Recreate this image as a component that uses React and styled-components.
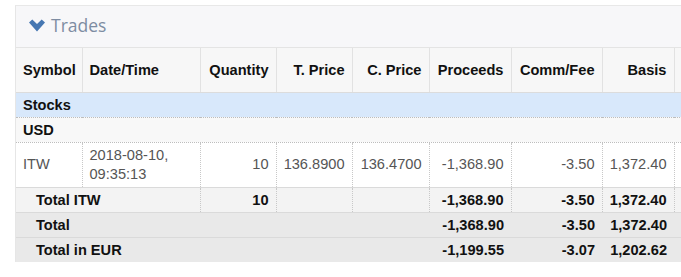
import React from 'react'
import styled, { createGlobalStyle } from 'styled-components'

const GlobalStyle = createGlobalStyle`
  html, body {
    margin: 0;
    padding: 0;
    background: #fff;
    overflow: hidden;
  }
  body {
    font-family: "Liberation Sans", Arial, sans-serif;
  }
`

const columns = [66, 118, 76, 76, 77, 82, 91, 72, 60]

const Page = styled.div`
  padding: 5px 0 0 15px;
  width: 760px;
`

const Panel = styled.section`
  border-left: 1px solid #e6e6e6;
  border-top: 1px solid #e8e8e8;
  box-sizing: border-box;
`

const PanelHeader = styled.div`
  display: flex;
  align-items: center;
  gap: 6px;
  height: 42px;
  padding: 0 0 3px 13px;
  box-sizing: border-box;
  background: #f7f7f9;
  border-bottom: 1px solid #e4e4e4;
`

const Title = styled.h2`
  margin: 0;
  font-family: "Open Sans", sans-serif;
  font-weight: 400;
  font-size: 17.5px;
  color: #7d8ca2;
`

const Table = styled.table`
  border-collapse: collapse;
  table-layout: fixed;
  width: ${columns.reduce((a, b) => a + b, 0)}px;
  font-size: 14.6px;
`

const HeadCell = styled.th`
  height: 44px;
  padding: 0 7px;
  box-sizing: border-box;
  background: #f7f7f7;
  color: #111;
  font-weight: 700;
  text-align: ${p => p.$align || 'right'};
  border-right: 1px solid #e2e2e2;
  border-bottom: 1px solid #dcdcdc;
  white-space: nowrap;
`

const GroupRow = styled.tr`
  background: ${p => p.$bg};
`

const GroupCell = styled.td`
  height: 24px;
  padding: 0 7px;
  font-weight: 700;
  color: #111;
  border-bottom: 1px dotted #bdbdbd;
`

const DataRow = styled.tr`
  background: #fff;
`

const Cell = styled.td`
  height: 45px;
  padding: 3px 7px;
  box-sizing: border-box;
  color: #555;
  line-height: 19px;
  text-align: ${p => p.$align || 'right'};
  border-right: 1px dotted #c8c8c8;
  border-bottom: 1px dotted #c8c8c8;
  vertical-align: middle;
`

const TotalRow = styled.tr`
  background: ${p => p.$bg};
`

const TotalCell = styled.td`
  height: 24px;
  padding: 0 7px 0 ${p => (p.$indent ? '20px' : '7px')};
  color: #111;
  font-weight: 700;
  text-align: ${p => p.$align || 'right'};
  border-right: ${p => (p.$divided ? '1px dotted #c8c8c8' : 'none')};
  border-top: 1px solid #dadada;
  white-space: nowrap;
`

const Chevron = () => (
  <svg width="16" height="13" viewBox="0 0 16 13" aria-hidden="true">
    <path d="M0 3.6 L3.3 0.4 L8 5.1 L12.7 0.4 L16 3.6 L8 12.4 Z" fill="#4677b2" />
  </svg>
)

const headers = [
  ['Symbol', 'left'],
  ['Date/Time', 'left'],
  ['Quantity'],
  ['T. Price'],
  ['C. Price'],
  ['Proceeds'],
  ['Comm/Fee'],
  ['Basis'],
  [''],
]

const totals = [
  { label: 'Total', proceeds: '-1,368.90', fee: '-3.50', basis: '1,372.40' },
  { label: 'Total in EUR', proceeds: '-1,199.55', fee: '-3.07', basis: '1,202.62' },
]

export default function App() {
  return (
    <Page>
      <GlobalStyle />
      <Panel>
        <PanelHeader>
          <Chevron />
          <Title>Trades</Title>
        </PanelHeader>
        <Table>
          <colgroup>
            {columns.map((w, i) => (
              <col key={i} style={{ width: w }} />
            ))}
          </colgroup>
          <thead>
            <tr>
              {headers.map(([label, align], i) => (
                <HeadCell key={i} $align={align}>{label}</HeadCell>
              ))}
            </tr>
          </thead>
          <tbody>
            <GroupRow $bg="#d8e8fb">
              <GroupCell colSpan={9}>Stocks</GroupCell>
            </GroupRow>
            <GroupRow $bg="#f8f8f8">
              <GroupCell colSpan={9}>USD</GroupCell>
            </GroupRow>
            <DataRow>
              <Cell $align="left">ITW</Cell>
              <Cell $align="left">2018-08-10,<br />09:35:13</Cell>
              <Cell>10</Cell>
              <Cell>136.8900</Cell>
              <Cell>136.4700</Cell>
              <Cell>-1,368.90</Cell>
              <Cell>-3.50</Cell>
              <Cell>1,372.40</Cell>
              <Cell />
            </DataRow>
            <TotalRow $bg="#f3f3f3">
              <TotalCell colSpan={2} $align="left" $indent $divided>Total ITW</TotalCell>
              <TotalCell $divided>10</TotalCell>
              <TotalCell $divided />
              <TotalCell $divided />
              <TotalCell $divided>-1,368.90</TotalCell>
              <TotalCell $divided>-3.50</TotalCell>
              <TotalCell $divided>1,372.40</TotalCell>
              <TotalCell />
            </TotalRow>
            {totals.map(t => (
              <TotalRow key={t.label} $bg="#e9e9e9">
                <TotalCell colSpan={5} $align="left" $indent>{t.label}</TotalCell>
                <TotalCell>{t.proceeds}</TotalCell>
                <TotalCell>{t.fee}</TotalCell>
                <TotalCell>{t.basis}</TotalCell>
                <TotalCell />
              </TotalRow>
            ))}
          </tbody>
        </Table>
      </Panel>
    </Page>
  )
}
